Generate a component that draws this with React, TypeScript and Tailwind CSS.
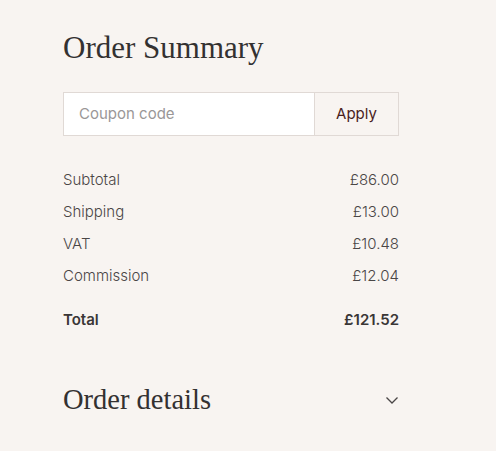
import React from 'react';

const rows = [
  { label: 'Subtotal', value: '£86.00' },
  { label: 'Shipping', value: '£13.00' },
  { label: 'VAT', value: '£10.48' },
  { label: 'Commission', value: '£12.04' },
];

export default function App() {
  return (
    <div className="min-h-[451px] w-full bg-[#f8f4f1] font-['Inter',sans-serif] text-[#3d3a3a]">
      <div className="ml-[63px] w-[336px] pt-[30px]">
        <h1 className="font-['Liberation_Serif',serif] text-[31px] leading-[36px] text-[#333131]">
          Order Summary
        </h1>

        {/* Coupon */}
        <div className="mt-[26px] flex h-[44px] border border-[#e0d9d5]">
          <input
            type="text"
            placeholder="Coupon code"
            className="min-w-0 flex-1 bg-white px-[15px] text-[15px] text-[#333] placeholder:text-[#9a9797] outline-none"
          />
          <button className="w-[84px] shrink-0 border-l border-[#e0d9d5] bg-[#f8f4f1] text-[15px] text-[#4a1d1d]">
            Apply
          </button>
        </div>

        {/* Totals */}
        <div className="mt-[33px] flex flex-col gap-[10px]">
          {rows.map((r) => (
            <div key={r.label} className="flex h-[22px] items-center justify-between text-[15px] font-light text-[#4a4646]">
              <span>{r.label}</span>
              <span>{r.value}</span>
            </div>
          ))}
        </div>
        <div className="mt-[22px] flex h-[22px] items-center justify-between text-[15px] font-semibold text-[#3a3636]">
          <span>Total</span>
          <span>£121.52</span>
        </div>

        {/* Order details */}
        <div className="mt-[52px] flex items-center justify-between">
          <h2 className="font-['Liberation_Serif',serif] text-[28.5px] leading-[34px] text-[#333131]">
            Order details
          </h2>
          <svg width="14" height="10" viewBox="0 0 14 10" fill="none">
            <path d="M1.5 2.5 L7 8 L12.5 2.5" stroke="#4a4646" strokeWidth="1.3" />
          </svg>
        </div>
      </div>
    </div>
  );
}
